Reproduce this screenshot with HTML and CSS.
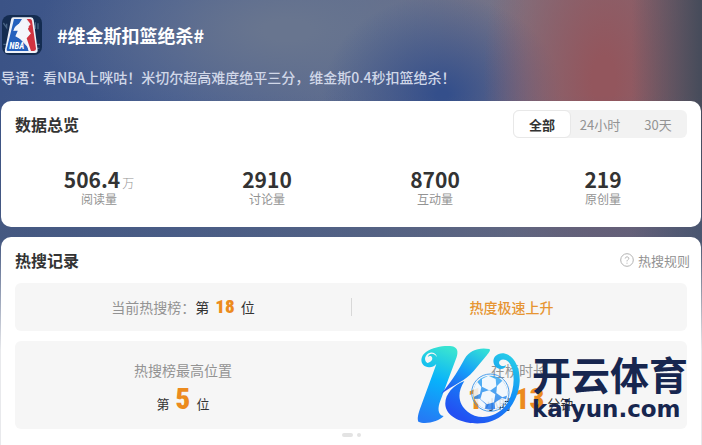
FILE: index.html
```html
<!DOCTYPE html>
<html lang="zh-CN">
<head>
<meta charset="utf-8">
<meta name="viewport" content="width=device-width, initial-scale=1">
<title>#维金斯扣篮绝杀#</title>
<link rel="stylesheet" href="styles.css">
</head>
<body>
<header class="topic">
  <div class="topic-head">
    <svg class="avatar" viewBox="0 0 120 120" aria-hidden="true">
      <rect width="120" height="120" rx="24" fill="#142c50"/>
      <path d="M4 24l10 14v-12m12 0v16m62-20v20m12-20v20m-12-9h12m8-8v18M4 88h110M8 100h104" stroke="#486485" stroke-width="4" fill="none"/>
      <path d="M34 7h53q7 0 8 8l12 91q0 8-8 8H15q-8 0-6-10L27 14q1-7 7-7z" fill="#eef1f8"/>
      <path d="M36 12h24l-14 22-8 12 13 2-3 17 28 30 4 13H17q-4 0-3-5z" fill="#2460bd"/>
      <path d="M74 12h10q5 0 6 5l12 84q0 6-6 7H85L70 70l14-16-8-16 10-10z" fill="#d13340"/>
      <path d="M68 12q10 4 6 17l7 7-5 8 11 11-13 15 13 38H81L72 82 40 64l8-18-14 2q2-17 24-25z" fill="#f4f5fb"/>
      <text class="avatar-text" x="22" y="101">NBA</text>
    </svg>
    <h1 class="topic-title">#维金斯扣篮绝杀#</h1>
  </div>
  <p class="topic-lead">导语：看NBA上咪咕！米切尔超高难度绝平三分，维金斯0.4秒扣篮绝杀！</p>
</header>
<main class="content">
  <section class="card">
    <div class="card-head">
      <h2 class="card-title">数据总览</h2>
      <div class="segments">
        <button class="segment segment-active" type="button">全部</button>
        <button class="segment" type="button">24小时</button>
        <button class="segment" type="button">30天</button>
      </div>
    </div>
    <dl class="stats">
      <div class="stat"><dd class="stat-value">506.4<span class="stat-unit">万</span></dd><dt class="stat-label">阅读量</dt></div>
      <div class="stat"><dd class="stat-value">2910</dd><dt class="stat-label">讨论量</dt></div>
      <div class="stat"><dd class="stat-value">8700</dd><dt class="stat-label">互动量</dt></div>
      <div class="stat"><dd class="stat-value">219</dd><dt class="stat-label">原创量</dt></div>
    </dl>
  </section>
  <section class="card card-records">
    <div class="card-head">
      <h2 class="card-title">热搜记录</h2>
      <a class="rules" href="#rules">
        <svg class="rules-icon" viewBox="0 0 14 14" aria-hidden="true"><circle cx="7" cy="7" r="6.3"/><path d="M5.2 5.5C5.3 3.3 8.8 3.4 8.8 5.4 8.8 6.7 7 6.7 7 8.4M7 9.7v1"/></svg>
        热搜规则
      </a>
    </div>
    <div class="panel panel-current">
      <p class="cell"><span class="muted">当前热搜榜：</span>第<b class="number">18</b>位</p>
      <p class="cell rising">热度极速上升</p>
    </div>
    <div class="panel panel-best">
      <div class="best">
        <h3 class="best-label">热搜榜最高位置</h3>
        <p class="best-value">第<b class="number number-large">5</b>位</p>
      </div>
      <div class="best">
        <h3 class="best-label">在榜时长</h3>
        <p class="best-value"><b class="number number-large number-flush">1</b>小时<b class="number number-large number-flush">13</b>分钟</p>
      </div>
    </div>
    <div class="pager"><span class="pager-bar"></span><span class="pager-dot"></span></div>
  </section>
</main>
<aside class="brand">
  <svg class="brand-logo" viewBox="105 30 318 240" aria-hidden="true">
    <defs>
      <linearGradient id="stem" x1="0.6" y1="0" x2="0.4" y2="1"><stop offset="0" stop-color="#38e3d2"/><stop offset=".45" stop-color="#08b2fb"/><stop offset="1" stop-color="#247bf5"/></linearGradient>
      <linearGradient id="arm" x1="0.8" y1="0" x2="0.2" y2="1"><stop offset="0" stop-color="#32ddd8"/><stop offset=".5" stop-color="#159df9"/><stop offset="1" stop-color="#2453ee"/></linearGradient>
      <linearGradient id="sweep" x1="1" y1="0" x2="0.35" y2="1"><stop offset="0" stop-color="#29d7e5"/><stop offset=".5" stop-color="#128ff7"/><stop offset="1" stop-color="#2350f2"/></linearGradient>
      <linearGradient id="ball" x1="0" y1="0" x2="0" y2="1"><stop offset="0" stop-color="#38adf5"/><stop offset="1" stop-color="#297aed"/></linearGradient>
      <clipPath id="ball-edge"><circle cx="328" cy="173" r="51"/></clipPath>
    </defs>
    <path fill="url(#stem)" d="M139 84C147 83 157 76 153 67C150 61 144 63 140 67C143 53 161 53 168 67C175 84 160 98 144 97C116 94 115 65 135 51C157 36 191 31 213 34C230 37 232 51 227 66L178 197C170 217 169 240 188 243C174 259 133 270 112 260C108 250 112 235 119 216L164 93C174 66 166 51 148 53C133 56 126 75 139 84Z"/>
    <path fill="url(#arm)" d="M180 177C217 132 233 104 251 71C266 46 294 36 325 42C330 45 324 53 318 60L278 108C250 140 220 148 180 177Z"/>
    <path fill="url(#sweep)" d="M250 138C212 153 187 184 194 216C202 250 255 271 310 264C370 255 412 201 416 140C418 100 400 60 368 55C344 53 331 73 340 90C350 108 374 104 375 90C370 96 355 94 354 84C354 72 371 69 382 80C405 105 403 169 376 209C343 252 290 255 260 230C233 209 226 176 250 138Z"/>
    <g opacity=".85">
      <circle cx="328" cy="173" r="56" fill="none" stroke="#3192ed" stroke-width="3"/>
      <circle cx="328" cy="173" r="51" fill="url(#ball)"/>
      <g clip-path="url(#ball-edge)" fill="#f2f9ff">
        <path d="M303 132l19-10 22 10 2 22-19 13-24-12z"/><path d="M348 153l16-16 22 8v34l-22 8-18-13z"/><path d="M304 172l20-6 19 12-4 24-21 6-20-16z"/><path d="M270 157l19-16 12 15-4 20-19 10-12-8z"/><path d="M341 203l22-14 22 6-14 32-28 2z"/><path d="M276 192l20-1 18 17-3 20-28-9z"/>
      </g>
    </g>
  </svg>
  <div class="brand-words"><strong class="brand-name">开云体育</strong><span class="brand-site">kaiyun.com</span></div>
</aside>
</body>
</html>
```
FILE: styles.css
```css
* { box-sizing: border-box; }
h1, h2, h3, p, dl, dd { margin: 0; font-weight: 400; }
body {
  margin: 0;
  min-height: 100vh;
  position: relative;
  display: flex;
  flex-direction: column;
  overflow: hidden;
  color: #333;
  font-family: "Noto Sans CJK SC", sans-serif;
  font-size: 14px;
  background:
    linear-gradient(180deg, transparent 240px, #e8e9ec 350px),
    linear-gradient(180deg, transparent 95px, #4c5c7e99 230px),
    linear-gradient(90deg, transparent 90%, #454b5a 100%),
    radial-gradient(ellipse 120px 240px at 86% 80px, #93565d 10%, #93565d00 100%),
    radial-gradient(ellipse 120px 100px at 63% 95px, #344f8b 5%, #344f8b00 100%),
    radial-gradient(ellipse 250px 110px at 41% 30px, #68758f 10%, #68758f00 100%),
    linear-gradient(90deg, #3b5386 0%, #445c91 25%, #5b698d 50%, #7d7483 75%, #816874 100%);
}
.topic { height: 101px; padding: 15px 1px 0; }
.topic-head { display: flex; align-items: center; gap: 15px; height: 40px; }
.avatar { width: 40px; height: 40px; margin-left: 1px; }
.avatar-text { font: italic 700 26px "Liberation Sans Narrow", "Roboto Condensed", Roboto, sans-serif; fill: #fff; }
.topic-title { color: #fff; font-size: 18px; font-weight: 700; line-height: 28px; }
.topic-lead { margin-top: 12px; color: #d0d7e8; font-weight: 500; line-height: 20px; }
.content { flex: 1; display: flex; flex-direction: column; gap: 10px; padding: 0 1px; }
.card { padding: 8px 14px 20px; border-radius: 10px; background: #fff; }
.card-records { flex: 1; padding-bottom: 0; border-radius: 10px 10px 0 0; }
.card-head { display: flex; align-items: center; justify-content: space-between; height: 30px; }
.card-title { font-size: 16px; font-weight: 700; line-height: 24px; }
.segments { display: flex; height: 28px; border-radius: 6px; background: #f2f2f2; }
.segment {
  width: 58px;
  padding: 0;
  border: 0;
  border-radius: 6px;
  background: none;
  color: #939393;
  font: inherit;
  font-size: 13px;
}
.segment-active { border: 1px solid #e8e8e8; background: #fff; color: #333; font-weight: 700; }
.stats { display: grid; grid-template-columns: repeat(4, 1fr); margin-top: 28px; text-align: center; }
.stat { display: flex; flex-direction: column; }
.stat-value { height: 24px; font-size: 21px; font-weight: 700; line-height: 24px; }
.stat-unit { margin-left: 2px; color: #939393; font-size: 12px; font-weight: 300; line-height: 12px; }
.stat-label { color: #939393; font-size: 12px; line-height: 16px; }
.rules { display: flex; align-items: center; gap: 4px; margin-right: -3px; color: #939393; font-size: 13px; text-decoration: none; }
.rules-icon { width: 14px; height: 14px; fill: none; stroke: #b3b3b3; stroke-width: 1; }
.panel { display: grid; grid-template-columns: 1fr 1fr; border-radius: 6px; background: #f6f6f6; }
.panel-current { margin-top: 8px; padding: 15px 0; }
.cell { display: flex; align-items: center; justify-content: center; line-height: 18px; }
.rising { padding-right: 16px; border-left: 1px solid #d8d8d8; color: #e69532; font-weight: 500; }
.muted { color: #939393; }
.number { margin: 0 6px; color: #ec8b1e; font-family: "Liberation Sans Narrow", "Roboto Condensed", Roboto, sans-serif; font-size: 19px; font-weight: 900; }
.panel-best { margin-top: 10px; padding: 18px 0 11px; text-align: center; }
.best-label { color: #939393; font-size: 14px; line-height: 22px; }
.best-value { display: flex; align-items: baseline; justify-content: center; height: 37px; font-size: 13px; line-height: 37px; }
.number-large { font-size: 29px; }
.number-flush { margin: 0 3px; }
.pager { display: flex; justify-content: center; gap: 4px; margin-top: 4px; }
.pager-bar, .pager-dot { height: 4px; border-radius: 2px; background: #e3e3e3; }
.pager-bar { width: 11px; }
.pager-dot { width: 4px; }
.brand { position: absolute; right: 14px; bottom: 20px; display: flex; align-items: center; gap: 10px; color: #17264f; }
.brand-logo { width: 106px; height: 80px; }
.brand-words { display: flex; flex-direction: column; padding-top: 6px; }
.brand-name { font-size: 39px; font-weight: 700; line-height: 42px; }
.brand-site { font-family: "DejaVu Sans", sans-serif; font-size: 23px; font-weight: 700; line-height: 30px; }
```
